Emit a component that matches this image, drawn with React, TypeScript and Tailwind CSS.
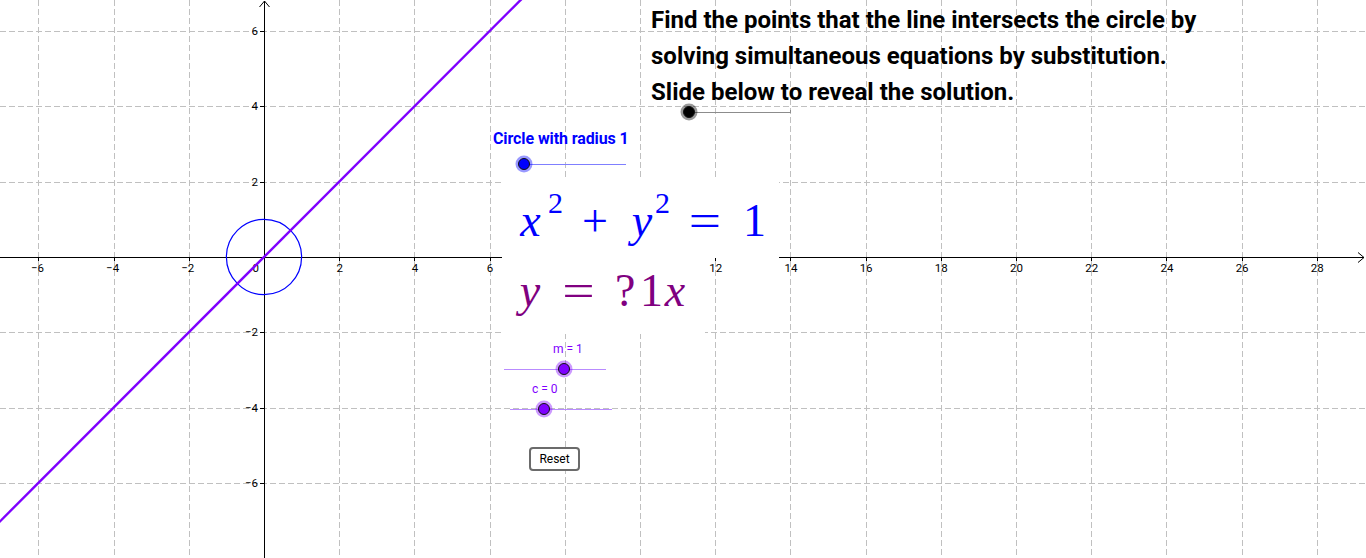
import React from "react";

const OX = 264;
const OY = 257;
const SX = 37.6;
const SY = 37.65;

const px = (u: number) => OX + u * SX;
const py = (v: number) => OY - v * SY;

const xTicks: number[] = [];
for (let k = -6; k <= 28; k += 2) if (k !== 0) xTicks.push(k);
const yTicks: number[] = [];
for (let k = -6; k <= 6; k += 2) if (k !== 0) yTicks.push(k);

const hiddenX = new Set([8, 10]);

function fmt(n: number) {
  return n < 0 ? "\u2212" + Math.abs(n) : String(n);
}

function Knob({ cx, cy, color }: { cx: number; cy: number; color: string }) {
  return (
    <g>
      <circle cx={cx} cy={cy} r={8.5} fill={color} fillOpacity={0.4} />
      <circle cx={cx} cy={cy} r={5.5} fill={color} stroke="#111" strokeWidth={1} />
    </g>
  );
}

function Graph() {
  return (
    <svg className="absolute inset-0" width={1366} height={558} viewBox="0 0 1366 558">
      {/* grid */}
      <g stroke="#c0c0c0" strokeWidth={1} strokeDasharray="6 3" shapeRendering="crispEdges">
        {[-8].concat(xTicks).map((k) => (
          <line key={"gx" + k} x1={Math.round(px(k)) + 0.5} y1={0} x2={Math.round(px(k)) + 0.5} y2={558} />
        ))}
        {yTicks.map((k) => (
          <line key={"gy" + k} x1={0} y1={Math.round(py(k)) + 0.5} x2={1366} y2={Math.round(py(k)) + 0.5} />
        ))}
      </g>
      {/* axes */}
      <g stroke="#000" strokeWidth={1} shapeRendering="crispEdges">
        <line x1={0} y1={OY + 0.5} x2={1364} y2={OY + 0.5} />
        <line x1={OX + 0.5} y1={1} x2={OX + 0.5} y2={558} />
        {xTicks.map((k) => (
          <line key={"tx" + k} x1={Math.round(px(k)) + 0.5} y1={OY} x2={Math.round(px(k)) + 0.5} y2={OY + 4} />
        ))}
        {yTicks.map((k) => (
          <line key={"ty" + k} x1={OX - 4} y1={Math.round(py(k)) + 0.5} x2={OX} y2={Math.round(py(k)) + 0.5} />
        ))}
      </g>
      <g stroke="#000" strokeWidth={1} fill="none">
        <polyline points="1358,252.5 1364,257.5 1358,262.5" />
        <polyline points="259.5,7 264.5,1 269.5,7" />
      </g>
      {/* labels */}
      <g fill="#000" fontFamily="Roboto, 'Liberation Sans', sans-serif" fontSize={11.5}>
        {xTicks
          .filter((k) => !hiddenX.has(k))
          .map((k) => (
            <text key={"lx" + k} x={px(k) + (k < 0 ? -1 : 0.5)} y={272} textAnchor="middle">
              {fmt(k)}
            </text>
          ))}
        {yTicks.map((k) => (
          <text key={"ly" + k} x={258} y={py(k) + 4} textAnchor="end">
            {fmt(k)}
          </text>
        ))}
        <text x={259} y={272} textAnchor="end">
          0
        </text>
      </g>
      {/* circle x^2 + y^2 = 1 */}
      <circle cx={OX} cy={OY} r={37.6} fill="none" stroke="#0000ff" strokeWidth={1.2} />
      {/* line y = x */}
      <line x1={px(-8)} y1={py(-8)} x2={px(8)} y2={py(8)} stroke="#7f00ff" strokeWidth={2.4} />

      {/* sliders */}
      <line x1={689} y1={112.5} x2={790} y2={112.5} stroke="#8c8c8c" strokeWidth={1} />
      <line x1={790.5} y1={110} x2={790.5} y2={113} stroke="#8c8c8c" strokeWidth={1} />
      <Knob cx={689} cy={112} color="#000000" />

      <line x1={524} y1={164.5} x2={626} y2={164.5} stroke="#7f7fff" strokeWidth={1} />
      <Knob cx={524} cy={164} color="#0000ff" />

      <line x1={504} y1={369.5} x2={606} y2={369.5} stroke="#b98bff" strokeWidth={1} />
      <Knob cx={564} cy={369} color="#7f00ff" />

      <line x1={510} y1={409.5} x2={612} y2={409.5} stroke="#b98bff" strokeWidth={1} />
      <Knob cx={544} cy={409} color="#7f00ff" />
    </svg>
  );
}

const serif = "font-['Liberation_Serif','Times_New_Roman',serif]";

export default function App() {
  return (
    <div className="relative w-[1366px] h-[558px] overflow-hidden bg-white font-['Roboto','Liberation_Sans',sans-serif]">
      <Graph />

      {/* Instructions */}
      <div className="absolute left-[651px] top-[2px] flex flex-col text-[24px] leading-[36px] font-bold text-black">
        <p>Find the points that the line intersects the circle by</p>
        <p>solving simultaneous equations by substitution.</p>
        <p>Slide below to reveal the solution.</p>
      </div>

      {/* circle slider label */}
      <div className="absolute left-[493px] top-[129px] text-[16px] leading-[20px] font-bold text-[#0000ff] tracking-[-0.1px]">
        Circle with radius 1
      </div>

      {/* equation 1 */}
      <div
        className={`absolute left-[502px] top-[177px] w-[277px] h-[81px] bg-white pl-[16px] pt-[21px] flex items-baseline text-[46px] leading-[46px] whitespace-nowrap text-[#0000ff] ${serif}`}
      >
        <span className="w-[25px] text-center italic">x</span>
        <span className="relative -top-[23px] ml-[5px] w-[14px] text-center text-[30px]">2</span>
        <span className="ml-[16px] w-[34px] text-center">+</span>
        <span className="ml-[15px] w-[30px] text-center italic">y</span>
        <span className="relative -top-[23px] -ml-[2px] w-[15px] text-center text-[30px]">2</span>
        <span className="ml-[17px] w-[36px] text-center scale-x-125">=</span>
        <span className="ml-[20px] w-[19px] text-center">1</span>
      </div>

      {/* equation 2 */}
      <div
        className={`absolute left-[502px] top-[258px] w-[203px] h-[76px] bg-white pl-[16px] pt-[10px] flex items-baseline text-[46px] leading-[46px] whitespace-nowrap text-[#800080] ${serif}`}
      >
        <span className="w-[24px] text-center italic">y</span>
        <span className="ml-[18px] w-[37px] text-center scale-x-125">=</span>
        <span className="ml-[18px] w-[15px] text-center">?</span>
        <span className="ml-[10px] w-[15px] text-center">1</span>
        <span className="ml-[5px] w-[30px] text-center italic">x</span>
      </div>

      {/* m and c labels */}
      <div className="absolute left-[553px] top-[342px] text-[12px] leading-[14px] text-[#7f00ff]">m = 1</div>
      <div className="absolute left-[532px] top-[382px] text-[12px] leading-[14px] text-[#7f00ff]">c = 0</div>

      {/* Reset */}
      <button className="absolute left-[529px] top-[447px] w-[51px] h-[24px] rounded-[4px] border-2 border-[#6b6b6b] bg-white text-[12px] leading-[18px] text-black">
        Reset
      </button>
    </div>
  );
}
